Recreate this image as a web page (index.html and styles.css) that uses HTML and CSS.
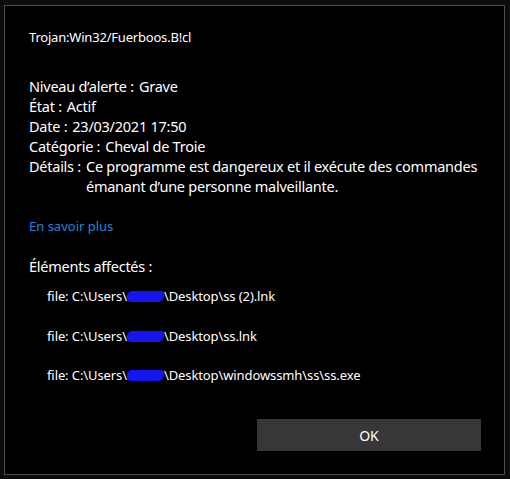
FILE: index.html
```html
<!DOCTYPE html>
<html lang="fr">
<head>
<meta charset="utf-8">
<link rel="stylesheet" href="styles.css">
</head>
<body>
<div class="dialog">
  <div class="title">Trojan:Win32/Fuerboos.B!cl</div>
  <div class="props">
    <div class="row"><span class="label">Niveau d’alerte :</span><span class="value">Grave</span></div>
    <div class="row"><span class="label">État :</span><span class="value">Actif</span></div>
    <div class="row"><span class="label">Date :</span><span class="value">23/03/2021 17:50</span></div>
    <div class="row"><span class="label">Catégorie :</span><span class="value">Cheval de Troie</span></div>
    <div class="row"><span class="label">Détails :</span><span class="value">Ce programme est dangereux et il exécute des commandes émanant d’une personne malveillante.</span></div>
  </div>
  <a class="link" href="#">En savoir plus</a>
  <div class="affected">Éléments affectés :</div>
  <ul class="files">
    <li>file: C:\Users\<span class="blur"></span>\Desktop\ss (2).lnk</li>
    <li>file: C:\Users\<span class="blur"></span>\Desktop\ss.lnk</li>
    <li>file: C:\Users\<span class="blur"></span>\Desktop\windowssmh\ss\ss.exe</li>
  </ul>
  <div class="actions"><button class="ok">OK</button></div>
</div>
</body>
</html>
```
FILE: styles.css
```css
html, body {
  margin: 0;
  padding: 0;
  background: #0c0c0c;
}
body {
  width: 510px;
  height: 479px;
  padding: 5px 0 0 4px;
  box-sizing: border-box;
  font-family: "Noto Sans", "Open Sans", sans-serif;
  color: #ffffff;
}
.dialog {
  width: 501px;
  height: 470px;
  box-sizing: border-box;
  border: 1px solid #4d4d4d;
  background: #000000;
  padding: 22px 10px 0 24px;
  display: flex;
  flex-direction: column;
}
.title {
  font-size: 13px;
  line-height: 18px;
  letter-spacing: -0.2px;
}
.props {
  margin-top: 30px;
  font-size: 14.5px;
  line-height: 20px;
  letter-spacing: -0.25px;
}
.row {
  display: flex;
  gap: 5px;
}
.label {
  flex: none;
}
.link {
  margin-top: 20px;
  color: #1f86d6;
  text-decoration: none;
  font-size: 13px;
  line-height: 20px;
  align-self: flex-start;
}
.affected {
  margin-top: 20px;
  font-size: 14.5px;
  line-height: 20px;
  letter-spacing: -0.25px;
}
.files {
  list-style: none;
  margin: 10px 0 0 0;
  padding: 0 0 0 18px;
  font-size: 13px;
  line-height: 20px;
  letter-spacing: -0.1px;
  display: flex;
  flex-direction: column;
  gap: 19.5px;
}
.blur {
  display: inline-block;
  width: 37px;
  height: 11px;
  background: #1515f0;
  border-radius: 5px 3px 6px 4px;
  vertical-align: -1px;
}
.actions {
  margin-top: auto;
  margin-bottom: 23px;
  padding-right: 14px;
  display: flex;
  justify-content: flex-end;
}
.ok {
  width: 224px;
  height: 32px;
  background: #373737;
  color: #ffffff;
  border: none;
  font-family: "Noto Sans", "Open Sans", sans-serif;
  font-size: 14px;
  margin-right: -1px;
}
```
